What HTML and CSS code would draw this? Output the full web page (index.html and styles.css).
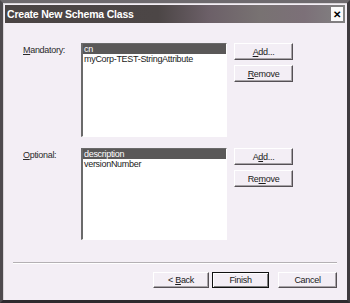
FILE: index.html
```html
<!DOCTYPE html>
<html lang="en">
<head>
  <meta charset="UTF-8">
  <title>Create New Schema Class</title>
  <link rel="stylesheet" href="styles.css">
</head>
<body>
  <div class="window">
    <div class="titlebar">
      <span class="title">Create New Schema Class</span>
      <span class="close">&#x2715;</span>
    </div>

    <div class="content">
      <div class="row row-mandatory">
        <label class="label"><u>M</u>andatory:</label>
        <div class="listbox">
          <div class="item selected">cn</div>
          <div class="item">myCorp-TEST-StringAttribute</div>
        </div>
        <div class="side-buttons">
          <button class="btn"><u>A</u>dd...</button>
          <button class="btn"><u>R</u>emove</button>
        </div>
      </div>

      <div class="row row-optional">
        <label class="label"><u>O</u>ptional:</label>
        <div class="listbox">
          <div class="item selected">description</div>
          <div class="item">versionNumber</div>
        </div>
        <div class="side-buttons">
          <button class="btn">A<u>d</u>d...</button>
          <button class="btn">Re<u>m</u>ove</button>
        </div>
      </div>
    </div>

    <div class="separator"></div>

    <div class="footer">
      <button class="btn btn-back">&lt; <u>B</u>ack</button>
      <button class="btn btn-default">Finish</button>
      <button class="btn btn-cancel">Cancel</button>
    </div>
  </div>
</body>
</html>
```

FILE: styles.css
```css
body {
  margin: 0;
  padding: 0;
  background: #f3eef5;
  font-family: "Liberation Sans", Arial, sans-serif;
  font-size: 9px;
  letter-spacing: -0.3px;
  color: #000;
}

.window {
  width: 350px;
  height: 303px;
  box-sizing: border-box;
  background: #f3eef5;
  border-style: solid;
  border-width: 3px;
  border-color: #6e6a6e #3e3a3e #2e2a2e #4e4a4e;
  padding: 2px;
  box-shadow: inset 1px 1px #d8d4d8;
}

/* Title bar */
.titlebar {
  height: 18px;
  display: flex;
  align-items: center;
  justify-content: space-between;
  padding-left: 2px;
  padding-right: 2px;
  background: linear-gradient(to right, #4a4444 0%, #4c4646 45%, #6c6068 60%, #787272 75%, #7c7078 88%, #828282 100%);
}

.title {
  color: #fff;
  font-weight: bold;
  font-size: 10.5px;
  letter-spacing: -0.2px;
}

.close {
  width: 12px;
  height: 14px;
  display: flex;
  align-items: center;
  justify-content: center;
  background: #fbfafb;
  color: #000;
  font-size: 10px;
  font-weight: bold;
  letter-spacing: 0;
}

/* Lists */
.content {
  padding: 20px 0 0 18px;
  display: flex;
  flex-direction: column;
  gap: 11px;
}

.row {
  display: grid;
  grid-template-columns: 58px 146px 59px;
  align-items: start;
}

.row-mandatory .listbox {
  height: 94px;
}

.row-optional .listbox {
  height: 92px;
}

.label {
  padding-top: 2px;
  color: #2a2a2a;
}

.listbox {
  box-sizing: border-box;
  background: #fff;
  border-style: solid;
  border-width: 1px 1px 1px 2px;
  border-color: #6a6a6a #ffffff #ffffff #6a6a6a;
}

.item {
  height: 10px;
  line-height: 10px;
  padding-left: 1px;
  white-space: nowrap;
  color: #1a1a1a;
}

.item.selected {
  background: #5a5858;
  color: #fff;
}

.side-buttons {
  margin-left: 7px;
  width: 59px;
  display: flex;
  flex-direction: column;
  gap: 5px;
}

/* Buttons */
.btn {
  box-sizing: border-box;
  height: 17px;
  padding: 0;
  font-family: inherit;
  font-size: 9px;
  letter-spacing: -0.3px;
  color: #1a1a1a;
  background: #f3eef5;
  border: 1px solid;
  border-color: #ffffff #555055 #555055 #ffffff;
  box-shadow: inset -1px -1px #a8a4a8;
}

.separator {
  margin: 22px 8px 0 8px;
  height: 1px;
  background: #b4b0b4;
  border-bottom: 1px solid #fff;
}

.footer {
  display: flex;
  justify-content: flex-end;
  padding: 8px 8px 0 0;
}

.footer .btn {
  height: 16px;
}

.btn-back {
  width: 56px;
}

.btn-default {
  width: 57px;
  margin-left: 3px;
  border: 1px solid #111;
  box-shadow: inset 1px 1px #fff, inset -1px -1px #808080;
}

.btn-cancel {
  width: 59px;
  margin-left: 9px;
}
```
